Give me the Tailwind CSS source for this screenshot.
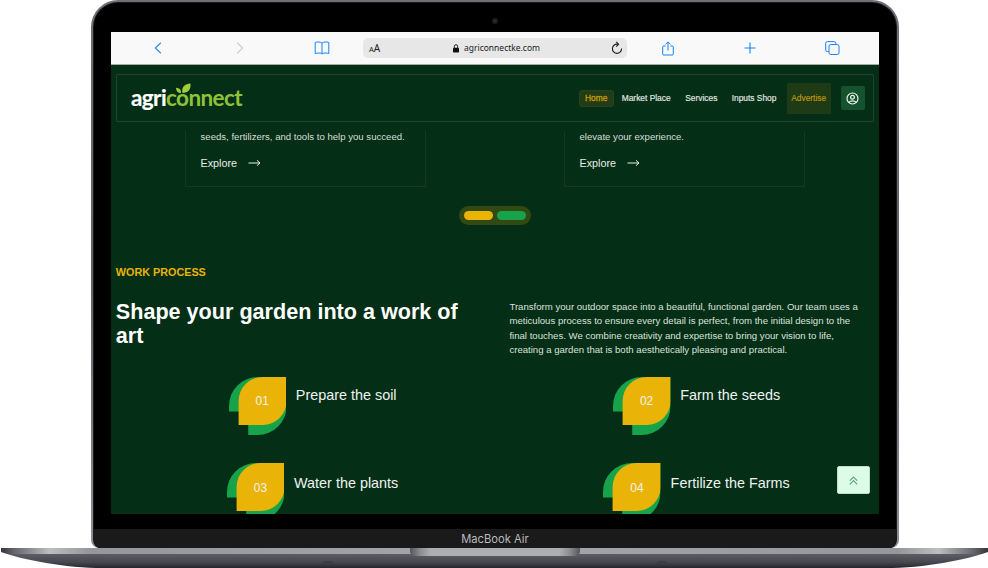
<!DOCTYPE html>
<html lang="en">
<head>
<meta charset="utf-8">
<title>AgriConnect</title>
<script src="https://cdn.jsdelivr.net/npm/@tailwindcss/browser@4"></script>
</head>
<body class="bg-white overflow-hidden font-['Liberation_Sans',sans-serif]">
<div class="w-[988px] h-[568px] flex flex-col items-center overflow-hidden">
  <!-- lid -->
  <div class="ml-[2px] w-[808px] h-[548px] rounded-t-[27px] rounded-b-[8px] bg-linear-to-b from-[#6f7077] via-[#606168] to-[#8e8f95] p-[2px] pb-0">
    <div class="h-full rounded-t-[25px] rounded-b-[8px] bg-[#1b1b1e] p-[1px] pb-0">
      <div class="h-full rounded-t-[24px] rounded-b-[7px] bg-black flex flex-col items-center overflow-hidden">
        <div class="h-[29px] shrink-0 flex items-center pt-[7px]">
          <div class="size-[6px] rounded-full bg-[#1d1d1d] flex items-center justify-center"><div class="size-[2px] rounded-full bg-[#363639]"></div></div>
        </div>
        <!-- screen -->
        <div class="w-[768px] h-[482px] shrink-0 bg-[#052e16] text-white flex flex-col overflow-hidden relative">
          <!-- browser bar -->
          <div class="h-[33px] shrink-0 bg-[#f9f9f9] border-b border-[#a9aaa9] grid grid-cols-[252px_264px_252px] items-center text-[#1683fb]">
            <div class="flex items-center pl-[43px]">
              <svg class="w-[8px] h-[12px]" viewBox="0 0 8 12" fill="none" stroke="#3391fb" stroke-width="1.3"><path d="M6.8 .8 1.4 6l5.4 5.2"/></svg>
              <svg class="w-[8px] h-[12px] ml-[74px]" viewBox="0 0 8 12" fill="none" stroke="#cfcfd1" stroke-width="1.3"><path d="M1.2.8 6.6 6l-5.4 5.2"/></svg>
              <svg class="w-[16px] h-[14px] ml-[70px]" viewBox="0 0 16 14" fill="none" stroke="currentColor" stroke-width="1"><path d="M8 2.2C7 .8 3 .6 1.2 1.5v11.1C3 11.8 7 11.700 8 12.900c1-1.200 5-1.100 6.800-.3V1.500C13 .6 9 .8 8 2.200zM8 2.200v10.700"/></svg>
            </div>
            <div class="h-[20px] rounded-[5px] bg-[#e7e7e8] flex items-center px-[6px] text-[#222] font-['Noto_Sans',sans-serif]">
              <div class="flex items-baseline w-[84px] leading-none"><span class="text-[7.500px]">A</span><span class="text-[10px]">A</span></div>
              <svg class="w-[6px] h-[9px]" viewBox="0 0 6 9"><rect y="3.800" width="6" height="4.700" rx=".8" fill="#111"/><path d="M1.400 4V2.300a1.600 1.600 0 0 1 3.200 0V4" fill="none" stroke="#111" stroke-width=".9"/></svg>
              <svg class="ml-[4px] w-[80px] h-[16px] overflow-visible" viewBox="0 0 80 16"><text x="1" y="11.400" font-family="Noto Sans" font-size="9.600" fill="#222" textLength="76" lengthAdjust="spacingAndGlyphs">agriconnectke.com</text></svg>
              <svg class="w-[12px] h-[14px] ml-auto mr-[-2px]" viewBox="0 0 12 14" fill="none" stroke="#222" stroke-width="1.100"><path d="M6.500 3.200A4.600 4.600 0 1 0 10.600 7.600M5.200.8l2.400 2.400-2.400 2.400"/></svg>
            </div>
            <div class="flex items-center pl-[35px]">
              <svg class="w-[12px] h-[15px]" viewBox="0 0 12 15" fill="none" stroke="#1683fb" stroke-width="1"><path d="M3.600 5H1.800a1.100 1.100 0 0 0-1.100 1.100v6.800A1.100 1.100 0 0 0 1.800 14h8.400a1.100 1.100 0 0 0 1.100-1.100V6.100A1.100 1.100 0 0 0 10.200 5H8.400M6 9.500V1M3.500 3.400 6 .9l2.500 2.500"/></svg>
              <svg class="w-[12px] h-[12px] ml-[70px]" viewBox="0 0 12 12" fill="none" stroke="#1683fb" stroke-width="1.100"><path d="M6 .5v11M.5 6h11"/></svg>
              <svg class="w-[15px] h-[14px] ml-[69px]" viewBox="0 0 15 14" fill="none" stroke="#1683fb" stroke-width="1"><rect x="4" y="3.500" width="10" height="10" rx="1.800"/><path d="M3.800 10.500H2.300A1.600 1.600 0 0 1 .7 8.900V2.200A1.600 1.600 0 0 1 2.300.6h6.900a1.600 1.600 0 0 1 1.600 1.600v1.200"/></svg>
            </div>
          </div>
          <!-- site header -->
          <div class="h-[66px] shrink-0 pt-[9px] px-[5px]">
            <header class="h-[48px] border border-[#1f4530] rounded-[1px] flex items-center pr-[8.300px] text-[8.400px] text-[#e3eae5]">
              <div class="relative ml-[14px] flex items-center whitespace-nowrap font-[Lato,sans-serif] font-bold text-[22.500px] leading-[28px] tracking-[-.6px]">
                <span class="text-white [-webkit-text-stroke:.2px]">agri</span><span class="text-[#8fc23a]">connect</span>
                <svg class="absolute left-[44px] top-[-1px] w-[16px] h-[11px]" viewBox="44 1 16 11"><path d="M51.500 11C50.300 5.500 53 2 59.500 1.500 60 7.500 57.500 10.800 51.500 11zM50 11c.3-3-1.300-5-5-5.200.1 3.500 1.800 5.200 5 5.200z" fill="#a0cd3c"/></svg>
              </div>
              <nav class="ml-auto flex items-center">
                <a class="w-[35px] h-[17px] rounded-[3px] border border-[#2d4316] bg-[#213c16] text-[#c79d09] [-webkit-text-stroke:.3px] flex items-center justify-center">Home</a>
                <a class="ml-[8px] w-[49px] whitespace-nowrap [-webkit-text-stroke:.15px]">Market Place</a>
                <a class="ml-[14.500px] w-[32px] [-webkit-text-stroke:.15px]">Services</a>
                <a class="ml-[14.500px] w-[45px] whitespace-nowrap [-webkit-text-stroke:.15px]">Inputs Shop</a>
                <a class="ml-[10px] w-[44px] h-[31px] rounded-[1px] bg-[#1e3b16] text-[#c29a09] flex items-center justify-center [-webkit-text-stroke:.15px]">Advertise</a>
                <a class="ml-[10px] size-[24px] rounded-[2px] bg-[#14532d] flex items-center justify-center">
                  <svg class="size-[13px]" viewBox="0 0 13 13" fill="none" stroke="#eef5f0" stroke-width="1.200"><circle cx="6.500" cy="6.500" r="5.500"/><circle cx="6.500" cy="5.200" r="1.900"/><path d="M2.800 10.300c1.700-2 5.700-2 7.400 0"/></svg>
                </a>
              </nav>
            </header>
          </div>
          <!-- service cards -->
          <div class="h-[56px] shrink-0 flex pl-[74px] gap-[138px]">
            <div class="w-[241px] border border-t-0 border-[#16391f] pl-[14.500px]">
              <p class="text-[9.600px] leading-[12px] text-[#d5ded8] whitespace-nowrap">seeds, fertilizers, and tools to help you succeed.</p>
              <div class="mt-[11.500px] flex items-center text-[10.800px] leading-[16px] text-[#e8eeea]">Explore
                <svg class="ml-[11px] w-[13px] h-[8px]" viewBox="0 0 13 8" fill="none" stroke="currentColor"><path d="M.5 4H12M9 1.300 12 4 9 6.700"/></svg>
              </div>
            </div>
            <div class="w-[241px] border border-t-0 border-[#16391f] pl-[14.500px]">
              <p class="text-[9.600px] leading-[12px] text-[#d5ded8] whitespace-nowrap">elevate your experience.</p>
              <div class="mt-[11.500px] flex items-center text-[10.800px] leading-[16px] text-[#e8eeea]">Explore
                <svg class="ml-[11px] w-[13px] h-[8px]" viewBox="0 0 13 8" fill="none" stroke="currentColor"><path d="M.5 4H12M9 1.300 12 4 9 6.700"/></svg>
              </div>
            </div>
          </div>
          <!-- pager -->
          <div class="mt-[19px] self-center w-[72px] h-[19px] shrink-0 rounded-full bg-[#334914] flex items-center justify-center gap-[4.800px]">
            <div class="w-[29px] h-[9.600px] rounded-full bg-[#eab308]"></div>
            <div class="w-[29px] h-[9.600px] rounded-full bg-[#16a34a]"></div>
          </div>
          <!-- work process -->
          <p class="mt-[39px] pl-[4.800px] text-[10.800px] leading-[16px] font-bold text-[#eab308] shrink-0">WORK PROCESS</p>
          <div class="mt-[20px] pl-[4.800px] flex shrink-0 h-[63px]">
            <h2 class="w-[393.600px] pr-[40px] text-[21.600px] leading-[24px] font-bold">Shape your garden into a work of art</h2>
            <p class="w-[355px] text-[9.600px] leading-[14.400px] text-[#d9e2dc]">Transform your outdoor space into a beautiful, functional garden. Our team uses a meticulous process to ensure every detail is perfect, from the initial design to the final touches. We combine creativity and expertise to bring your vision to life, creating a garden that is both aesthetically pleasing and practical.</p>
          </div>
          <svg class="hidden"><symbol id="leaf" viewBox="0 0 57.600 58">
            <path d="M0 34.500V28.800A28.800 28.800 0 0 1 28.800 0H57.600V29.200A28.800 28.800 0 0 1 28.800 58H19.200V34.500z" fill="#16a34a"/>
            <path d="M9.600 48V24A24 24 0 0 1 33.600 0h24v24a24 24 0 0 1-24 24z" fill="#eab308"/>
            </symbol></svg>
          <div class="mt-[13.600px] ml-[9.600px] grid grid-cols-[384px_384px] gap-y-[28.800px] text-[14.400px] text-[#eef3f0] shrink-0">
            <div class="flex justify-center gap-[9.600px]">
              <div class="relative w-[57.600px] h-[58px]"><svg class="size-full"><use href="#leaf"/></svg><span class="absolute left-[9.600px] top-0 size-[48px] flex items-center justify-center text-[12px]">01</span></div>
              <h3 class="leading-[37.500px]">Prepare the soil</h3>
            </div>
            <div class="flex justify-center gap-[9.600px]">
              <div class="relative w-[57.600px] h-[58px]"><svg class="size-full"><use href="#leaf"/></svg><span class="absolute left-[9.600px] top-0 size-[48px] flex items-center justify-center text-[12px]">02</span></div>
              <h3 class="leading-[37.500px]">Farm the seeds</h3>
            </div>
            <div class="flex justify-center gap-[9.600px]">
              <div class="relative w-[57.600px] h-[58px]"><svg class="size-full"><use href="#leaf"/></svg><span class="absolute left-[9.600px] top-[.5px] size-[48px] flex items-center justify-center text-[12px]">03</span></div>
              <h3 class="leading-[40px]">Water the plants</h3>
            </div>
            <div class="flex justify-center gap-[9.600px]">
              <div class="relative w-[57.600px] h-[58px]"><svg class="size-full"><use href="#leaf"/></svg><span class="absolute left-[9.600px] top-[.5px] size-[48px] flex items-center justify-center text-[12px]">04</span></div>
              <h3 class="leading-[40px]">Fertilize the Farms</h3>
            </div>
          </div>
          <!-- back to top -->
          <button class="absolute right-[9.500px] bottom-[20px] w-[32.500px] h-[28px] rounded-[2px] bg-[#dcfce7] border border-[#b9e0c8] flex items-center justify-center">
            <svg class="w-[9px] h-[9px]" viewBox="0 0 9 9" fill="none" stroke="#5fa57c" stroke-width="1.200"><path d="M.8 4.700 4.500 1l3.700 3.700M.8 8.300 4.500 4.600l3.700 3.700"/></svg>
          </button>
        </div>
        <div class="mt-[15px] w-full grow bg-[#1a1a1a] flex justify-center text-[#b9b9bd] font-[Inter,sans-serif] text-[11.200px] leading-[20px]">MacBook Air</div>
      </div>
    </div>
  </div>
  <!-- base -->
  <svg class="w-[988px] h-[20px] shrink-0" viewBox="0 0 988 20">
    <defs>
      <linearGradient id="deck"><stop offset="0" stop-color="#333338"/><stop offset=".015" stop-color="#66676c"/><stop offset=".05" stop-color="#bdbdc1"/><stop offset=".09" stop-color="#96969c"/><stop offset=".5" stop-color="#a5a5ab"/><stop offset=".91" stop-color="#96969c"/><stop offset=".95" stop-color="#bdbdc1"/><stop offset=".985" stop-color="#66676c"/><stop offset="1" stop-color="#333338"/></linearGradient>
      <linearGradient id="under" x2="0" y2="1"><stop offset="0" stop-color="#5d5d65"/><stop offset=".6" stop-color="#46464f"/><stop offset="1" stop-color="#25252e"/></linearGradient>
      <linearGradient id="notch"><stop offset="0" stop-color="#55555b"/><stop offset=".06" stop-color="#8b8b90"/><stop offset=".12" stop-color="#adadb2"/><stop offset=".88" stop-color="#adadb2"/><stop offset=".94" stop-color="#8b8b90"/><stop offset="1" stop-color="#55555b"/></linearGradient>
      <clipPath id="body"><path d="M1 0H988V4C965 12 925 20 885 20H104C64 20 24 12 1 4z"/></clipPath>
    </defs>
    <g clip-path="url(#body)">
      <rect y="6" width="988" height="14" fill="url(#under)"/>
      <rect width="988" height="6" fill="url(#deck)"/>
      <path d="M323 15.500q1-1.500 3-1.500h4q2 0 3 1.500M657 15.500q1-1.500 3-1.500h4q2 0 3 1.500" fill="none" stroke="#34343b"/>
    </g>
    <path d="M410 0H580V3q0 5-6 5H416q-6 0-6-5z" fill="url(#notch)"/>
  </svg>
</div>
</body>
</html>
